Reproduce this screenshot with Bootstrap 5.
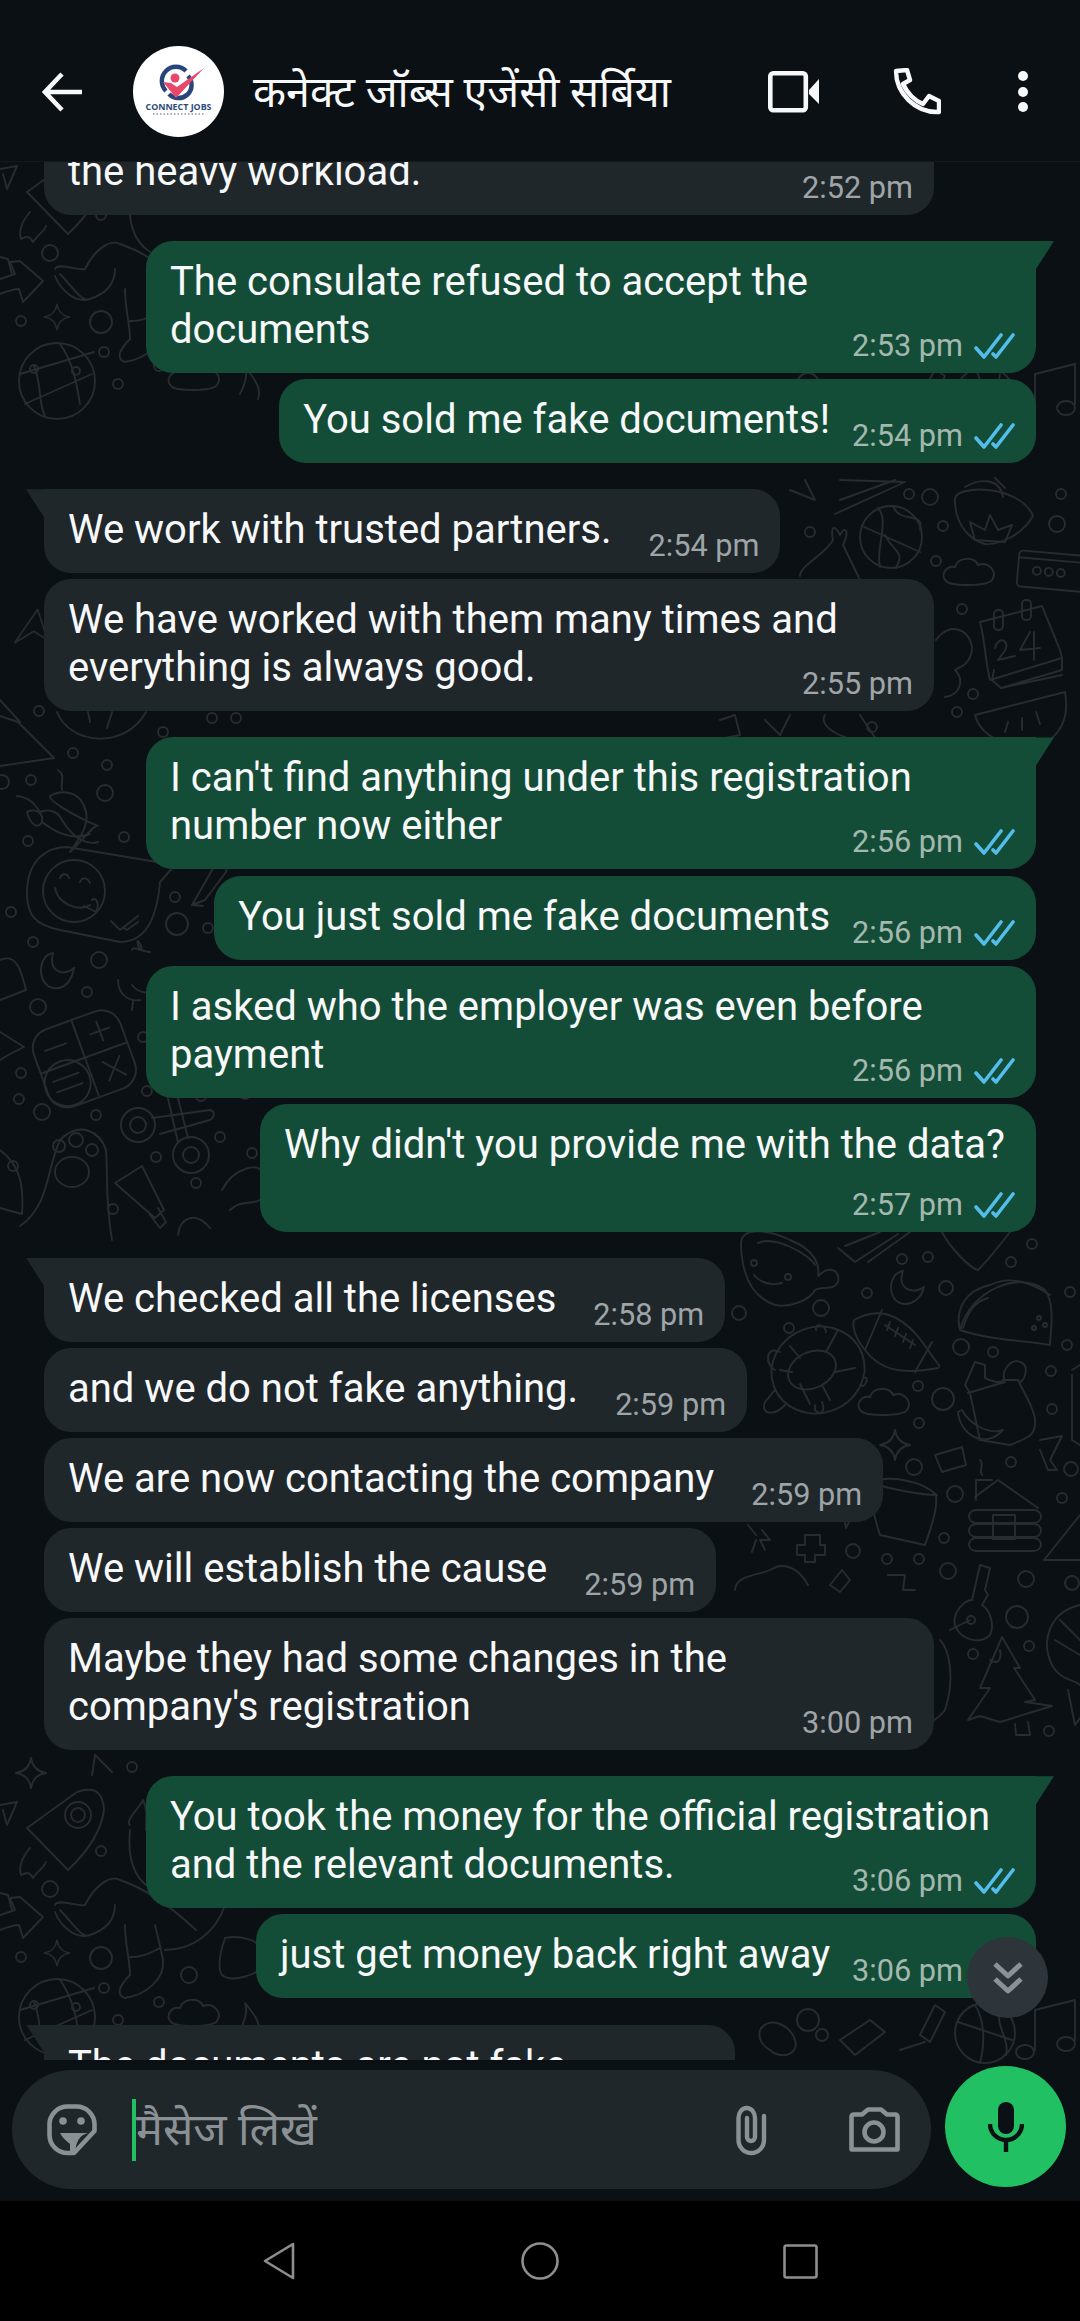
<!DOCTYPE html>
<html lang="hi">
<head>
  <meta charset="UTF-8">
  <meta name="viewport" content="width=device-width, initial-scale=1.0">
  <title>कनेक्ट जॉब्स एजेंसी सर्बिया</title>
  <link href="https://cdn.jsdelivr.net/npm/bootstrap@5.3.0/dist/css/bootstrap.min.css" rel="stylesheet">
  <style>
    body {
      background: #000;
      font-family: Roboto, "Noto Sans", sans-serif;
      color: #f7f8fa;
    }
    .phone {
      position: relative;
      width: 1080px;
      height: 2321px;
      overflow: hidden;
      background: #0b1014;
    }
    /* Wallpaper doodles */
    .doodles {
      position: absolute;
      top: 0;
      left: 0;
      fill: none;
      stroke: #282c2f;
      stroke-width: 1.9;
      stroke-linecap: round;
      stroke-linejoin: round;
    }
    /* Top bar */
    .topbar {
      position: relative;
      height: 162px;
      padding-top: 22px;
      background: #0b1014;
      border-bottom: 1px solid #15191c;
    }
    .back-icon { margin-left: 42px; }
    .avatar { margin-left: 51px; border-radius: 50%; background: #fff; }
    .chat-title {
      margin-left: 29px;
      font-size: 43px;
      line-height: 50px;
      width: 435px;
      white-space: nowrap;
    }
    .video-icon { margin-left: 80px; }
    .call-icon { margin-left: 73px; }
    .more-icon { margin-left: 77px; }
    /* Messages */
    .chat {
      position: relative;
      height: 1898px;
      overflow: hidden;
      gap: 6.1px;
    }
    .msg {
      position: relative;
      max-width: 890px;
      padding: 17px 21px 9px 24px;
      border-radius: 27px;
      font-size: 40px;
      line-height: 48px;
    }
    .msg-in { align-self: flex-start; margin-left: 44px; background: #1f272a; }
    .msg-out { align-self: flex-end; margin-right: 44px; background: #144d37; }
    .msg-wide { width: 890px; }
    .msg-roomy { padding-right: 31px; }
    .first-msg { margin-top: -79px; }
    .group-start { margin-top: 20px; }
    .tail-in { border-top-left-radius: 0; }
    .tail-out { border-top-right-radius: 0; }
    .tail-in::before,
    .tail-out::before {
      content: "";
      position: absolute;
      top: 0;
      width: 18px;
      height: 28px;
    }
    .tail-in::before {
      left: -18px;
      background: #1f272a;
      clip-path: polygon(0 0, 100% 0, 100% 100%, 2px 3px);
    }
    .tail-out::before {
      right: -18px;
      background: #144d37;
      clip-path: polygon(0 0, 100% 0, calc(100% - 2px) 3px, 0 100%);
    }
    .msg-line { display: flex; align-items: flex-end; gap: 22px; }
    .msg-in .msg-line { gap: 37px; }
    .msg-text { padding-bottom: 10px; white-space: nowrap; }
    .msg-meta {
      display: flex;
      align-items: center;
      justify-content: flex-end;
      gap: 11px;
      font-size: 30.7px;
      line-height: 36px;
      white-space: nowrap;
    }
    .msg-in .msg-meta { color: #9ea4a7; }
    .msg-out .msg-meta { color: #a3b8af; }
    .meta-over { margin-top: -36px; }
    .meta-below { margin: 8px -10px 0 0; }
    .tick { stroke: #53bdeb; stroke-width: 3.6; fill: none; stroke-linecap: round; stroke-linejoin: round; }
    .scroll-btn {
      position: absolute;
      right: 32px;
      top: 1775px;
      width: 81px;
      height: 81px;
      border-radius: 50%;
      background: #2e353a;
    }
    /* Message box */
    .composer { position: relative; height: 141px; }
    .input-pill {
      width: 919px;
      height: 119px;
      margin: 10px 0 0 12px;
      padding: 0 31px 0 35px;
      border-radius: 60px;
      background: #1f272a;
    }
    .caret-bar { width: 4px; height: 62px; margin-left: 35px; background: #21c063; }
    .input-hint { font-size: 45px; color: #8a9094; white-space: nowrap; }
    .mic-btn {
      width: 121px;
      height: 121px;
      margin: 6px 0 0 14px;
      border-radius: 50%;
      background: #21c063;
    }
    .camera-icon { margin-left: 81px; }
    /* Android buttons */
    .softkeys { position: relative; height: 120px; padding-left: 263px; background: #000; }
    .key-home { margin-left: 226px; }
    .key-recent { margin-left: 224px; }
  </style>
</head>
<body>
  <div class="phone d-flex flex-column">

    <svg class="doodles" width="1080" height="2201" viewBox="0 0 1080 2201" aria-hidden="true">
      <defs>
        <path id="spark" d="M0-15Q2-2 15 0Q2 2 0 15Q-2 2-15 0Q-2-2 0-15Z"/>
        <path id="puff" d="M-24 8C-30 2-24-8-15-6C-12-16 4-17 8-8C18-12 28-2 22 7C18 13-18 14-24 8Z"/>
        <path id="dart" d="M-22-6L22-14L6 18L2 0Z"/>
        <g id="tile">
          <!-- dots -->
          <circle cx="39" cy="711" r="5"/><circle cx="212" cy="718" r="5"/><circle cx="236" cy="718" r="5"/><circle cx="163" cy="732" r="5"/><circle cx="73" cy="753" r="5"/><circle cx="107" cy="765" r="5"/><circle cx="31" cy="780" r="5"/><circle cx="2" cy="782" r="7"/><circle cx="105" cy="793" r="8"/><circle cx="124" cy="837" r="5"/><circle cx="28" cy="841" r="5"/><circle cx="175" cy="897" r="5"/><circle cx="177" cy="924" r="11"/><circle cx="11" cy="912" r="5"/><circle cx="208" cy="928" r="5"/><circle cx="33" cy="942" r="5"/><circle cx="99" cy="960" r="8"/><circle cx="87" cy="992" r="5"/><circle cx="38" cy="1007" r="8"/><circle cx="143" cy="1037" r="5"/><circle cx="21" cy="1073" r="5"/><circle cx="19" cy="1099" r="5"/><circle cx="42" cy="1112" r="8"/><circle cx="96" cy="1115" r="5"/><circle cx="147" cy="1091" r="5"/><circle cx="201" cy="1096" r="5"/><circle cx="245" cy="1094" r="5"/><circle cx="220" cy="1137" r="5"/><circle cx="156" cy="1157" r="5"/><circle cx="252" cy="1153" r="5"/><circle cx="13" cy="1166" r="5"/><circle cx="196" cy="1183" r="5"/><circle cx="113" cy="1209" r="5"/>
          <circle cx="909" cy="494" r="5"/><circle cx="930" cy="497" r="8"/><circle cx="1061" cy="494" r="5"/><circle cx="943" cy="526" r="5"/><circle cx="1057" cy="524" r="8"/><circle cx="810" cy="532" r="5"/><circle cx="936" cy="561" r="5"/><circle cx="962" cy="609" r="5"/><circle cx="973" cy="694" r="5"/><circle cx="957" cy="712" r="5"/><circle cx="872" cy="727" r="5"/>
          <circle cx="1032" cy="1244" r="5"/><circle cx="902" cy="1259" r="5"/><circle cx="928" cy="1257" r="5"/><circle cx="1011" cy="1262" r="5"/><circle cx="867" cy="1293" r="5"/><circle cx="946" cy="1288" r="7"/><circle cx="739" cy="1313" r="7"/><circle cx="821" cy="1308" r="8"/><circle cx="1070" cy="1292" r="5"/><circle cx="789" cy="1328" r="5"/><circle cx="961" cy="1347" r="8"/><circle cx="993" cy="1352" r="5"/><circle cx="1067" cy="1345" r="5"/><circle cx="1051" cy="1371" r="5"/><circle cx="918" cy="1386" r="5"/><circle cx="943" cy="1399" r="11"/><circle cx="1052" cy="1409" r="5"/><circle cx="919" cy="1423" r="5"/><circle cx="914" cy="1467" r="8"/><circle cx="1011" cy="1462" r="5"/><circle cx="1071" cy="1469" r="7"/><circle cx="955" cy="1494" r="8"/><circle cx="1062" cy="1498" r="5"/><circle cx="788" cy="1511" r="5"/><circle cx="944" cy="1538" r="5"/><circle cx="853" cy="1551" r="7"/><circle cx="887" cy="1559" r="5"/><circle cx="919" cy="1559" r="5"/><circle cx="948" cy="1571" r="8"/><circle cx="1026" cy="1579" r="8"/><circle cx="1072" cy="1583" r="7"/><circle cx="1017" cy="1617" r="11"/><circle cx="1029" cy="1646" r="5"/><circle cx="973" cy="1654" r="5"/><circle cx="1049" cy="1731" r="5"/><circle cx="851" cy="1720" r="8"/>
          <circle cx="132" cy="1767" r="5"/><circle cx="101" cy="1851" r="5"/><circle cx="50" cy="1889" r="8"/><circle cx="21" cy="1957" r="5"/><circle cx="101" cy="1958" r="11"/><circle cx="189" cy="1975" r="8"/><circle cx="104" cy="1988" r="5"/><circle cx="159" cy="2002" r="5"/><circle cx="118" cy="2020" r="5"/>
          <!-- melon, left -->
          <path d="M57 712C70 745 125 750 146 712M88 712L90 722M112 712L107 728"/>
          <path d="M0 716L18 722L54 758L0 766M0 700L20 722"/>
          <!-- chilli -->
          <path d="M50 796C60 790 78 790 84 806C92 822 80 838 70 852C85 838 94 824 98 826C72 815 48 800 50 796Z"/>
          <path d="M17 796C30 797 36 806 40 812C50 808 58 812 62 820C74 840 88 845 98 842M58 770C66 775 60 783 62 790"/>
          <path d="M27 812C34 808 44 812 42 822C38 830 30 824 27 812ZM42 822C60 836 75 840 90 834"/>
          <!-- sticker smiley -->
          <path d="M27 893C27 862 45 847 67 847L175 865L160 882C158 905 152 942 120 942L60 930C35 925 27 915 27 893Z"/>
          <circle cx="74" cy="891" r="31"/>
          <path d="M55 888C58 904 78 912 90 905M60 878C62 873 67 873 69 878M80 882C82 877 87 877 90 883M84 906L96 912C100 904 96 896 92 900"/>
          <path d="M111 921L120 930L138 916M124 928L127 930L138 922"/>
          <!-- moon -->
          <path d="M53 953C37 955 37 985 53 988C65 990 72 980 74 968C66 976 48 974 53 953Z"/>
          <!-- mic -->
          <path d="M140 950C132 930 146 950 140 950M132 985C142 997 155 992 158 985M132 950C132 945 144 952 150 952"/>
          <path d="M118 980C118 995 130 1002 140 1000M133 1002L132 1010"/>
          <!-- dart, hex, left edge -->
          <path d="M0 960C18 952 22 975 26 990L0 1000"/>
          <path d="M0 1032L24 1047L8 1055L0 1060"/>
          <!-- calculator -->
          <g transform="rotate(-20 84 1058)">
            <rect x="38" y="1018" width="92" height="82" rx="20"/>
            <path d="M38 1058H130M85 1018V1098M50 1038H72M98 1038H118M108 1028V1048M100 1068L118 1088M118 1068L100 1088"/>
            <circle cx="60" cy="1076" r="23"/>
            <path d="M47 1070H74M47 1081H74"/>
          </g>
          <!-- scissors -->
          <circle cx="138" cy="1125" r="17"/><circle cx="138" cy="1125" r="8"/>
          <circle cx="191" cy="1155" r="18"/><circle cx="191" cy="1155" r="8"/>
          <path d="M152 1118L210 1110C216 1112 214 1118 210 1120L160 1134M178 1142L166 1090C170 1082 176 1086 176 1090L188 1138"/>
          <!-- paw -->
          <path d="M20 1226C50 1205 46 1170 60 1140C80 1120 100 1132 106 1150C108 1175 105 1200 112 1240"/>
          <circle cx="59" cy="1146" r="6"/><circle cx="76" cy="1140" r="7"/><circle cx="92" cy="1150" r="6"/><ellipse cx="72" cy="1172" rx="17" ry="15"/>
          <path d="M0 1150C20 1165 24 1185 22 1214L0 1208"/>
          <!-- tube -->
          <path d="M115 1183L142 1166L164 1210L155 1218ZM150 1215L160 1228L166 1222L158 1208"/>
          <!-- small head -->
          <path d="M222 1190C235 1165 260 1165 260 1170M230 1210C240 1200 250 1205 260 1200M178 1235C180 1218 195 1210 210 1228"/>
          <!-- pen -->
          <path d="M192 905L215 865C220 858 228 865 226 872L205 900ZM192 905L203 906"/>
          <!-- basketball -->
          <circle cx="891" cy="537" r="31"/>
          <path d="M862 526L920 552M878 508C890 520 875 550 880 567M893 506C900 525 925 510 920 530M885 535C895 555 905 550 896 568"/>
          <!-- bowl with lotus -->
          <path d="M955 500C953 484 1020 484 1033 516C1022 535 1000 545 985 544C970 540 955 525 955 500Z"/>
          <path d="M970 522L985 530L990 515L998 530L1012 525L1005 542L975 540Z"/>
          <path d="M965 487C980 478 1000 478 1003 497M995 478L1005 488"/>
          <!-- note card -->
          <g transform="rotate(5 1050 570)">
            <rect x="1018" y="553" width="70" height="36" rx="4"/>
            <path d="M1018 560H1088"/>
            <circle cx="1037" cy="572" r="4"/><circle cx="1049" cy="572" r="4"/><circle cx="1061" cy="572" r="4"/>
          </g>
          <use href="#puff" x="970" y="573"/>
          <!-- calendar -->
          <path d="M980 622L1042 606L1060 650L1062 658L990 680C985 660 985 640 980 622Z"/>
          <path d="M994 670L992 680L1001 688L1062 670V658M1001 688L1062 675"/>
          <rect x="994" y="610" width="9" height="20" rx="4"/><rect x="1022" y="600" width="9" height="20" rx="4"/>
          <path d="M995 648C998 635 1012 640 1004 652L998 660L1015 656M1030 632L1020 650L1040 648M1034 632L1034 660"/>
          <!-- watermelon right -->
          <path d="M975 715L1065 692C1070 720 1060 740 1030 750C1000 745 980 735 975 715Z"/>
          <path d="M1008 722L1005 732M1022 718L1022 730M1036 712L1040 724"/>
          <!-- clapping hand, bat -->
          <path d="M800 576C800 565 825 555 833 540C830 525 835 525 840 535C845 525 850 530 843 545L860 580"/>
          <path d="M840 480L905 482L835 514M840 500L895 480M790 490L815 500L805 480"/>
          <!-- bear head -->
          <path d="M936 640C950 620 972 630 972 650C970 665 958 668 955 670C965 680 960 695 945 697"/>
          <!-- bottom of first stack -->
          <path d="M720 720L735 715L740 735L725 738M765 720L780 735L790 715M825 715C815 730 860 745 880 745L860 715"/>
          <!-- cup -->
          <path d="M741 1245C740 1225 770 1230 790 1240C815 1250 820 1265 818 1276C830 1265 840 1270 838 1282C832 1292 825 1285 815 1290C810 1300 790 1308 775 1305C755 1298 742 1280 741 1245Z"/>
          <path d="M758 1243C775 1235 810 1255 815 1265"/>
          <circle cx="754" cy="1263" r="3"/><circle cx="788" cy="1277" r="3"/>
          <path d="M754 1275C762 1285 775 1285 782 1283"/>
          <!-- pencils -->
          <path d="M838 1248L855 1262L898 1234M868 1262L910 1232M845 1246L880 1232"/>
          <path d="M942 1232C950 1248 970 1268 978 1270C990 1258 1000 1245 1010 1232"/>
          <!-- moon 2 -->
          <path d="M903 1271C888 1273 887 1298 900 1303C912 1307 922 1297 924 1287C915 1295 896 1290 903 1271Z"/>
          <!-- turtle -->
          <ellipse cx="818" cy="1370" rx="47" ry="43" transform="rotate(-20 818 1370)"/>
          <ellipse cx="812" cy="1370" rx="25" ry="18" transform="rotate(-25 812 1370)"/>
          <path d="M800 1358L790 1346M826 1352L838 1330M835 1372L855 1368M822 1385L830 1400M800 1384L810 1404M792 1372L780 1370M780 1352C765 1345 765 1365 775 1370M864 1378C870 1375 865 1390 860 1385M775 1390L765 1402C760 1415 775 1416 785 1405M815 1405L815 1410C820 1416 826 1412 822 1402"/>
          <path d="M816 1330C815 1322 825 1325 826 1332"/>
          <use href="#dart" x="758" y="1340" transform="rotate(-45 758 1340) scale(.9)" transform-origin="758 1340"/>
          <use href="#puff" x="885" y="1403"/>
          <!-- football -->
          <path d="M854 1320C880 1305 905 1315 928 1350C940 1368 941 1365 938 1368C900 1375 880 1370 865 1350C855 1338 852 1326 854 1320Z"/>
          <path d="M865 1350L882 1310M915 1372L932 1342M885 1325L915 1345M890 1322L887 1330M898 1328L895 1336M906 1334L903 1342M913 1340L910 1348"/>
          <!-- taco -->
          <path d="M960 1330C970 1290 1020 1270 1045 1290C1056 1305 1050 1335 1050 1345C1020 1340 990 1340 960 1330Z"/>
          <path d="M960 1330C955 1310 965 1290 990 1285C1000 1280 1020 1275 1050 1295M963 1328C970 1305 980 1300 988 1298"/>
          <circle cx="1039" cy="1318" r="2"/><circle cx="1045" cy="1325" r="2"/><circle cx="1034" cy="1328" r="2"/>
          <!-- groceries -->
          <path d="M970 1393L965 1385L975 1362L985 1365L985 1378C990 1380 1000 1385 1003 1380L1018 1380C1025 1395 1035 1410 1035 1420C1036 1435 1030 1437 1010 1445L980 1440Z"/>
          <path d="M968 1393L1005 1382M1005 1382C1000 1370 1012 1358 1020 1362C1030 1365 1025 1380 1020 1382M958 1412C960 1435 985 1450 1003 1430C990 1435 970 1425 962 1410Z"/>
          <!-- shrimp, right edge fragments -->
          <path d="M1072 1370C1080 1365 1080 1365 1080 1365M1072 1375L1072 1440L1080 1445"/>
          <path d="M1040 1440L1062 1436L1050 1460L1057 1470L1048 1470L1040 1450"/>
          <use href="#spark" x="895" y="1445"/>
          <!-- box -->
          <path d="M935 1455L962 1447L966 1465L942 1472Z"/>
          <!-- pot -->
          <path d="M870 1482C890 1490 925 1495 936 1495C938 1510 930 1530 925 1545L880 1535C875 1520 870 1500 870 1482ZM868 1482C890 1475 920 1480 937 1495"/>
          <use href="#dart" x="840" y="1510"/>
          <!-- cabin -->
          <path d="M975 1497L998 1480L1038 1508M976 1500V1480H992"/>
          <rect x="969" y="1510" width="72" height="13" rx="7"/><rect x="969" y="1524" width="72" height="13" rx="7"/><rect x="969" y="1538" width="72" height="13" rx="7"/>
          <rect x="993" y="1515" width="22" height="24"/>
          <path d="M980 1460C985 1465 978 1470 982 1475"/>
          <!-- triangle -->
          <path d="M1044 1560L1080 1515M1044 1560H1080"/>
          <!-- asterisk, plus, diamond -->
          <path d="M748 1525L756 1535M752 1552L756 1540M762 1530L770 1540H760L765 1550"/>
          <path d="M805 1535H820V1545H825V1555H815V1562H805V1555H797V1545H805Z"/>
          <path d="M830 1585L842 1570L850 1580L840 1592Z"/>
          <path d="M735 1590C735 1575 760 1575 770 1570C785 1560 800 1570 808 1585"/>
          <path d="M888 1575L905 1575L903 1590L915 1590"/>
          <!-- key -->
          <path d="M980 1565L990 1568L985 1590L988 1595L982 1605C990 1610 995 1625 990 1635C980 1645 960 1640 955 1625C952 1612 965 1600 972 1600Z"/>
          <circle cx="971" cy="1620" r="4"/>
          <path d="M950 1630L970 1620"/>
          <!-- tree -->
          <path d="M1002 1637L1020 1668L1014 1668L1035 1700L1025 1702L1052 1706L1000 1722L980 1716L968 1720L990 1688L980 1688L1002 1637Z"/>
          <path d="M1015 1724L1016 1735H1030L1028 1722M990 1660C998 1665 1002 1660 1000 1650"/>
          <!-- shrimp -->
          <path d="M1080 1605C1050 1612 1040 1640 1052 1665C1060 1680 1075 1680 1080 1685M1060 1620L1080 1640M1055 1640L1080 1655M1068 1690L1075 1725L1080 1718"/>
          <!-- pear behind bubble -->
          <path d="M940 1640C950 1650 955 1680 945 1710C935 1725 900 1735 880 1725"/>
          <!-- rocket -->
          <path d="M27 1828L77 1792Q103 1783 104 1810Q100 1840 68 1870Z"/>
          <circle cx="78" cy="1815" r="13"/><circle cx="78" cy="1815" r="7"/>
          <path d="M30 1848C24 1855 18 1865 21 1875C27 1872 30 1872 33 1878C38 1870 44 1868 46 1862"/>
          <use href="#spark" x="31" y="1773"/>
          <use href="#spark" x="57" y="1953" transform="scale(.85)" transform-origin="57 1953"/>
          <!-- arrow, leg -->
          <path d="M0 1915L15 1910L10 1898L20 1897L43 1917L23 1938L19 1925C12 1925 5 1928 0 1930"/>
          <path d="M55 1905C58 1898 78 1907 85 1905C95 1885 110 1875 120 1880C150 1890 180 1915 196 1930M55 1912C60 1925 75 1940 90 1935C105 1930 115 1920 115 1905M60 1910C70 1920 80 1935 85 1935"/>
          <path d="M125 1925C125 1945 130 1960 130 1975C120 1985 115 1995 125 1998C145 1995 165 1980 163 1960C160 1945 155 1925 155 1925M130 1957C145 1958 155 1950 160 1948"/>
          <path d="M165 1950C190 1950 215 1935 225 1905"/>
          <path d="M225 1938C240 1935 260 1940 260 1950M222 1975C215 1965 225 1938 225 1938M222 1975C235 1985 260 1970 260 1970"/>
          <path d="M0 1893L8 1895L12 1910"/>
          <path d="M0 1805L17 1802L7 1825L3 1810"/>
          <!-- hand, top of left -->
          <path d="M130 1825C125 1820 138 1810 143 1800C148 1810 146 1820 146 1830M130 1830C128 1850 130 1875 150 1888"/>
          <path d="M92 1775L95 1755L112 1772"/>
          <!-- globe -->
          <circle cx="57" cy="2017" r="38"/>
          <path d="M20 2010L94 1988M25 2040L92 2010M34 2002C42 2020 38 2040 45 2052M60 1980C75 2000 78 2030 80 2040"/>
          <circle cx="34" cy="2005" r="4"/><circle cx="76" cy="2007" r="4"/>
          <use href="#puff" x="195" y="2014"/>
          <path d="M240 2030C245 2020 248 2010 245 2003C255 2015 262 2025 258 2035"/>
          <!-- bottom right, above composer -->
          <path d="M760 2030C770 2015 790 2025 795 2040C800 2055 780 2060 770 2050C762 2045 758 2040 760 2030Z"/>
          <circle cx="808" cy="2020" r="11"/><circle cx="822" cy="2035" r="6"/>
          <path d="M840 2040L870 2020L885 2032L855 2055L840 2040Z"/>
          <circle cx="985" cy="2033" r="30"/>
          <path d="M958 2022L1012 2040M975 2005C985 2020 985 2045 980 2062M1000 2010C995 2025 1010 2040 1006 2055"/>
          <path d="M1035 2010L1075 2000M1035 2050V2010M1075 2040V2000"/>
          <ellipse cx="1025" cy="2052" rx="9" ry="7"/><ellipse cx="1066" cy="2044" rx="9" ry="7"/>
          <path d="M920 2035L935 2005L945 2012L930 2042ZM925 2042L900 2050"/>
        </g>
      </defs>
      <use href="#tile"/>
      <use href="#tile" y="-1636"/>
    </svg>

    <header class="topbar d-flex align-items-center">
      <svg class="back-icon" width="40" height="40" viewBox="0 0 40 40" fill="none" stroke="#f7f8fa" stroke-width="4.6">
        <path d="M40 20H3M20 2L3 20L20 38"/>
      </svg>
      <svg class="avatar" width="91" height="91" viewBox="0 0 91 91" fill="none">
        <path d="M33 45A13 13 0 1 1 53 25" stroke="#27457a" stroke-width="4.5"/>
        <path d="M55 30A13 13 0 0 1 36 48" stroke="#27457a" stroke-width="4.5"/>
        <circle cx="42" cy="32" r="4.5" fill="#e8476a"/>
        <path d="M30 36L43 52L71 22L44 41L38 37Z" fill="#e8476a"/>
        <text x="45.5" y="64" text-anchor="middle" font-family="Open Sans, sans-serif" font-size="9.5" font-weight="700" fill="#2c4a79" textLength="66" lengthAdjust="spacingAndGlyphs">CONNECT JOBS</text>
        <path d="M20 68H71" stroke="#4a5a75" stroke-width="1" stroke-dasharray="1.5 2"/>
      </svg>
      <div class="chat-title">कनेक्ट जॉब्स एजेंसी सर्बिया</div>
      <svg class="video-icon" width="52" height="42" viewBox="0 0 52 42" fill="#f7f8fa">
        <rect x="2.3" y="2.3" width="35.5" height="37" rx="3" fill="none" stroke="#f7f8fa" stroke-width="4.6"/>
        <path d="M41 19L51 8V33L41 23Z"/>
      </svg>
      <svg class="call-icon" width="48" height="47" viewBox="0 0 48 47" fill="none" stroke="#f7f8fa" stroke-width="4.4" stroke-linejoin="round">
        <path d="M3 3L14 2L17 12L10 16C14 25 22 33 30 36L36 28L46 33L46 44C22 45 3 25 3 3Z"/>
      </svg>
      <svg class="more-icon" width="10" height="42" viewBox="0 0 10 42" fill="#f7f8fa">
        <circle cx="5" cy="5" r="5"/><circle cx="5" cy="21" r="5"/><circle cx="5" cy="36" r="5"/>
      </svg>
    </header>

    <main class="chat d-flex flex-column">
      <div class="msg msg-in msg-wide first-msg">
        <div class="msg-text">&nbsp;<br>the heavy workload.</div>
        <div class="msg-meta meta-over">2:52 pm</div>
      </div>
      <div class="msg msg-out msg-wide tail-out group-start">
        <div class="msg-text">The consulate refused to accept the<br>documents</div>
        <div class="msg-meta meta-over">2:53 pm <svg width="41" height="26" viewBox="0 0 41 26"><path class="tick" d="M2 15L10 24L27 2M19 21L22 24L39 2"/></svg></div>
      </div>
      <div class="msg msg-out">
        <div class="msg-line">
          <div class="msg-text">You sold me fake documents!</div>
          <div class="msg-meta">2:54 pm <svg width="41" height="26" viewBox="0 0 41 26"><path class="tick" d="M2 15L10 24L27 2M19 21L22 24L39 2"/></svg></div>
        </div>
      </div>
      <div class="msg msg-in tail-in group-start">
        <div class="msg-line">
          <div class="msg-text">We work with trusted partners.</div>
          <div class="msg-meta">2:54 pm</div>
        </div>
      </div>
      <div class="msg msg-in msg-wide">
        <div class="msg-text">We have worked with them many times and<br>everything is always good.</div>
        <div class="msg-meta meta-over">2:55 pm</div>
      </div>
      <div class="msg msg-out msg-wide tail-out group-start">
        <div class="msg-text">I can't find anything under this registration<br>number now either</div>
        <div class="msg-meta meta-over">2:56 pm <svg width="41" height="26" viewBox="0 0 41 26"><path class="tick" d="M2 15L10 24L27 2M19 21L22 24L39 2"/></svg></div>
      </div>
      <div class="msg msg-out">
        <div class="msg-line">
          <div class="msg-text">You just sold me fake documents</div>
          <div class="msg-meta">2:56 pm <svg width="41" height="26" viewBox="0 0 41 26"><path class="tick" d="M2 15L10 24L27 2M19 21L22 24L39 2"/></svg></div>
        </div>
      </div>
      <div class="msg msg-out msg-wide">
        <div class="msg-text">I asked who the employer was even before<br>payment</div>
        <div class="msg-meta meta-over">2:56 pm <svg width="41" height="26" viewBox="0 0 41 26"><path class="tick" d="M2 15L10 24L27 2M19 21L22 24L39 2"/></svg></div>
      </div>
      <div class="msg msg-out msg-roomy">
        <div class="msg-text">Why didn't you provide me with the data?</div>
        <div class="msg-meta meta-below">2:57 pm <svg width="41" height="26" viewBox="0 0 41 26"><path class="tick" d="M2 15L10 24L27 2M19 21L22 24L39 2"/></svg></div>
      </div>
      <div class="msg msg-in tail-in group-start">
        <div class="msg-line">
          <div class="msg-text">We checked all the licenses</div>
          <div class="msg-meta">2:58 pm</div>
        </div>
      </div>
      <div class="msg msg-in">
        <div class="msg-line">
          <div class="msg-text">and we do not fake anything.</div>
          <div class="msg-meta">2:59 pm</div>
        </div>
      </div>
      <div class="msg msg-in">
        <div class="msg-line">
          <div class="msg-text">We are now contacting the company</div>
          <div class="msg-meta">2:59 pm</div>
        </div>
      </div>
      <div class="msg msg-in">
        <div class="msg-line">
          <div class="msg-text">We will establish the cause</div>
          <div class="msg-meta">2:59 pm</div>
        </div>
      </div>
      <div class="msg msg-in msg-wide">
        <div class="msg-text">Maybe they had some changes in the<br>company's registration</div>
        <div class="msg-meta meta-over">3:00 pm</div>
      </div>
      <div class="msg msg-out msg-wide tail-out group-start">
        <div class="msg-text">You took the money for the official registration<br>and the relevant documents.</div>
        <div class="msg-meta meta-over">3:06 pm <svg width="41" height="26" viewBox="0 0 41 26"><path class="tick" d="M2 15L10 24L27 2M19 21L22 24L39 2"/></svg></div>
      </div>
      <div class="msg msg-out">
        <div class="msg-line">
          <div class="msg-text">just get money back right away</div>
          <div class="msg-meta">3:06 pm <svg width="41" height="26" viewBox="0 0 41 26"><path class="tick" d="M2 15L10 24L27 2M19 21L22 24L39 2"/></svg></div>
        </div>
      </div>
      <div class="msg msg-in tail-in group-start">
        <div class="msg-line">
          <div class="msg-text">The documents are not fake</div>
          <div class="msg-meta">3:07 pm</div>
        </div>
      </div>
      <div class="scroll-btn d-flex align-items-center justify-content-center">
        <svg width="30" height="34" viewBox="0 0 30 34" fill="none" stroke="#8b9296" stroke-width="5" stroke-linejoin="round">
          <path d="M2 3L15 15L28 3M2 18L15 30L28 18"/>
        </svg>
      </div>
    </main>

    <footer class="composer d-flex align-items-start">
      <div class="input-pill d-flex align-items-center">
        <svg width="50" height="52" viewBox="0 0 50 52" fill="none" stroke="#8a9094" stroke-width="4.6" stroke-linejoin="round">
          <path d="M21 2.5H29A18 18 0 0 1 47.5 21V27L27 49H21A18 18 0 0 1 2.5 31V21A18 18 0 0 1 21 2.5Z"/>
          <circle cx="16" cy="17" r="3.8" fill="#8a9094" stroke="none"/><circle cx="34" cy="17" r="3.8" fill="#8a9094" stroke="none"/>
          <path d="M13 29H41C33 31 29 37 28 49H23V40C19 37 15 33 13 29Z" fill="#8a9094" stroke="none"/>
        </svg>
        <span class="caret-bar"></span>
        <span class="input-hint flex-grow-1">मैसेज लिखें</span>
        <svg width="33" height="52" viewBox="0 0 33 52" fill="none" stroke="#8a9094" stroke-width="4.4" stroke-linecap="round">
          <path d="M29 12V36A12.75 13 0 0 1 3.5 36V14A8.25 10 0 0 1 20 14V33A4 4 0 0 1 12 33V14"/>
        </svg>
        <svg class="camera-icon" width="51" height="45" viewBox="0 0 51 45" fill="none" stroke="#8a9094" stroke-width="4.6" stroke-linejoin="round">
          <path d="M4.5 7.5H13L19 2.5H32L38 7.5H46.5A2 2 0 0 1 48.5 9.5V42.5H2.5V9.5A2 2 0 0 1 4.5 7.5Z"/>
          <circle cx="25" cy="25" r="9.5"/>
        </svg>
      </div>
      <div class="mic-btn d-flex align-items-center justify-content-center">
        <svg width="36" height="50" viewBox="0 0 36 50" fill="none" stroke="#0b1014" stroke-width="4.4">
          <rect x="10" y="0" width="16" height="32" rx="8" fill="#0b1014" stroke="none"/>
          <path d="M2 22A16 16 0 0 0 34 22M18 38V50"/>
        </svg>
      </div>
    </footer>

    <nav class="softkeys d-flex align-items-center">
      <svg width="32" height="38" viewBox="0 0 32 38" fill="none" stroke="#8e8e8e" stroke-width="2.6" stroke-linejoin="round">
        <path d="M30 2V36L2 19Z"/>
      </svg>
      <svg class="key-home" width="38" height="38" viewBox="0 0 38 38" fill="none" stroke="#8e8e8e" stroke-width="2.6">
        <circle cx="19" cy="19" r="17.5"/>
      </svg>
      <svg class="key-recent" width="35" height="35" viewBox="0 0 35 35" fill="none" stroke="#8e8e8e" stroke-width="2.6">
        <rect x="1.5" y="1.5" width="32" height="32" rx="2"/>
      </svg>
    </nav>
  </div>
  <script src="https://cdn.jsdelivr.net/npm/bootstrap@5.3.0/dist/js/bootstrap.bundle.min.js"></script>
</body>
</html>
